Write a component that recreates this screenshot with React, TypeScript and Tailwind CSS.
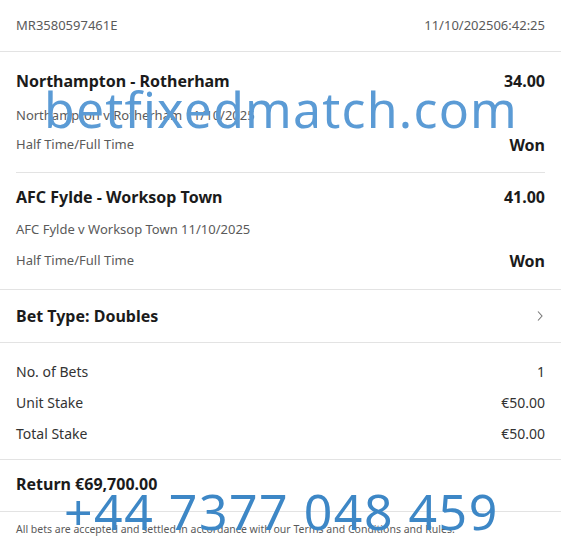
import React from "react";

const Selection = ({
  title,
  odds,
  event,
  market,
  result,
  pad,
}: {
  title: string;
  odds: string;
  event: string;
  market: string;
  result: string;
  pad: string;
}) => {
  return (
    <div className={pad}>
      <div className="flex h-5 items-center justify-between text-[16px] font-bold text-[#1b1b1b]">
        <span>{title}</span>
        <span>{odds}</span>
      </div>
      <div className="sub flex h-5 items-center text-[13px] text-[#5a5a5a]">{event}</div>
      <div className="mkt flex h-5 items-center justify-between">
        <span className="text-[13px] text-[#5a5a5a]">{market}</span>
        <span className="text-[16px] font-bold text-[#1b1b1b]">{result}</span>
      </div>
    </div>
  );
};

const StakeRow = ({ label, value }: { label: string; value: string }) => (
  <div className="flex h-5 items-center justify-between text-[14px] text-[#333]">
    <span>{label}</span>
    <span>{value}</span>
  </div>
);

export default function App() {
  return (
    <div
      className="relative min-h-[549px] w-full overflow-hidden bg-white"
      style={{ fontFamily: '"Noto Sans", "Open Sans", sans-serif' }}
    >
      {/* header */}
      <div className="flex h-[52px] items-center justify-between border-b border-[#e3e3e3] px-4 text-[13px] text-[#5a5a5a]">
        <span>MR3580597461E</span>
        <span>11/10/202506:42:25</span>
      </div>

      {/* selections */}
      <div className="border-b border-[#e3e3e3] px-4">
        <Selection
          title="Northampton - Rotherham"
          odds="34.00"
          event="Northampton v Rotherham 11/10/2025"
          market="Half Time/Full Time"
          result="Won"
          pad="border-b border-[#e3e3e3] pt-[19px] pb-[17px] [&_.sub]:mt-[15px] [&_.mkt]:mt-[9px]"
        />
        <Selection
          title="AFC Fylde - Worksop Town"
          odds="41.00"
          event="AFC Fylde v Worksop Town 11/10/2025"
          market="Half Time/Full Time"
          result="Won"
          pad="pt-[14px] pb-[18px] [&_.sub]:mt-[13px] [&_.mkt]:mt-[11px]"
        />
      </div>

      {/* bet type */}
      <div className="flex h-[53px] items-center justify-between border-b border-[#e3e3e3] px-4">
        <span className="text-[16px] font-bold text-[#1b1b1b]">Bet Type: Doubles</span>
        <svg width="8" height="12" viewBox="0 0 8 12" className="mr-[1px]">
          <path d="M2 1.5l4 4.5-4 4.5" fill="none" stroke="#777" strokeWidth="1.1" />
        </svg>
      </div>

      {/* stakes */}
      <div className="flex flex-col gap-[11px] border-b border-[#e3e3e3] px-4 pt-[18px] pb-[16px]">
        <StakeRow label="No. of Bets" value="1" />
        <StakeRow label="Unit Stake" value="€50.00" />
        <StakeRow label="Total Stake" value="€50.00" />
      </div>

      {/* return */}
      <div className="border-b border-[#e3e3e3] px-4 pt-[14px] pb-[17px]">
        <div className="flex h-5 items-center text-[16px] font-bold text-[#1b1b1b]">Return €69,700.00</div>
      </div>

      <div className="px-4 pt-[10px] text-[10.5px] leading-[14px] text-[#5a5a5a]">
        All bets are accepted and settled in accordance with our Terms and Conditions and Rules.
      </div>

      {/* watermarks */}
      <div className="pointer-events-none absolute left-[44px] top-[84px] text-[50px] leading-none tracking-[1.2px] text-[#5b9bd5]">
        betfixedmatch.com
      </div>
      <div className="pointer-events-none absolute left-[64px] top-[486px] text-[50px] leading-none tracking-[1.5px] text-[#3d87c6]">
        +44 7377 048 459
      </div>
    </div>
  );
}
